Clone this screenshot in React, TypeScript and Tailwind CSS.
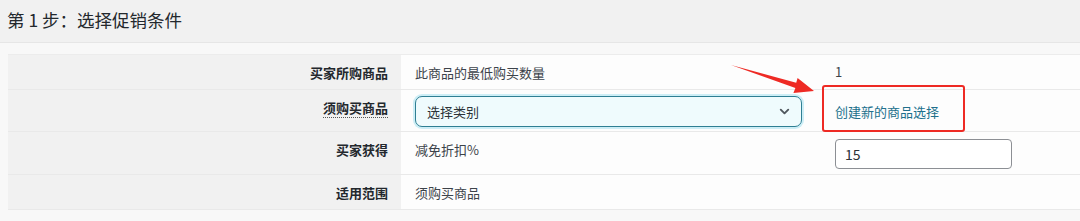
import { ChevronDown } from 'lucide-react';

const font = { fontFamily: '"Noto Sans CJK SC", "Noto Sans", sans-serif' };

function Row({
  label,
  height,
  dotted,
  children,
  extra,
}: {
  label: string;
  height: string;
  dotted?: boolean;
  children: React.ReactNode;
  extra?: React.ReactNode;
}) {
  return (
    <div className={`flex border-b border-[#e9e9e9] ${height}`}>
      <div className="flex w-[393px] shrink-0 justify-end bg-[#f1f1f1] pr-[13px] pt-[9px]">
        <span
          className={`text-[13px] font-bold leading-[18px] text-[#23282d] ${
            dotted ? 'border-b border-dotted border-[#555]' : ''
          } h-fit`}
        >
          {label}
        </span>
      </div>
      <div className="flex flex-1 bg-[#fdfdfd]">
        <div className="w-[426px] shrink-0 pl-[14px]">{children}</div>
        <div className="flex-1 pl-[8px]">{extra}</div>
      </div>
    </div>
  );
}

export default function App() {
  return (
    <div className="relative h-[221px] w-[1080px] overflow-hidden bg-[#f8f8f8]" style={font}>
      <div className="flex h-[43px] items-center border-b border-[#e6e6e6] bg-[#f1f1f1] pb-[2px] pl-[7px]">
        <h2 className="text-[17.5px] leading-none text-[#23282d]">第 1 步：选择促销条件</h2>
      </div>

      <div className="pl-[8px] pt-[11px]">
        <div className="border-t border-[#ececec]">
          <Row
            label="买家所购商品"
            height="h-[35px]"
            extra={<div className="pt-[8px] text-[13px] leading-[18px] text-[#3c434a]">1</div>}
          >
            <div className="pt-[9px] text-[13px] leading-[18px] text-[#3c434a]">此商品的最低购买数量</div>
          </Row>
          <Row
            label="须购买商品"
            height="h-[42px]"
            dotted
            extra={
              <div className="pt-[13px] text-[13px] leading-[18px] text-[#21708c]">创建新的商品选择</div>
            }
          >
            <div className="pt-[6px]">
              <div className="flex h-[31px] w-[387px] items-center justify-between rounded-[7px] border border-[#2f7f93] bg-[#effbfd] pl-[11px] pr-[9px] shadow-[0_0_0_2px_#cdeef6]">
                <span className="text-[13px] leading-none text-[#2c3338]">选择类别</span>
                <ChevronDown size={15} strokeWidth={3} className="text-[#50575e]" />
              </div>
            </div>
          </Row>
          <Row
            label="买家获得"
            height="h-[43px]"
            extra={
              <div className="pt-[7px]">
                <div className="flex h-[30px] w-[177px] items-center rounded-[4px] border border-[#8c8f94] bg-white pl-[9px] text-[14px] text-[#2c3338]">
                  15
                </div>
              </div>
            }
          >
            <div className="pt-[9px] text-[13px] leading-[18px] text-[#3c434a]">减免折扣%</div>
          </Row>
          <Row label="适用范围" height="h-[35px]">
            <div className="pt-[9px] text-[13px] leading-[18px] text-[#3c434a]">须购买商品</div>
          </Row>
        </div>
      </div>

      {/* annotation overlay */}
      <div className="pointer-events-none absolute left-[822px] top-[85px] h-[47px] w-[143px] rounded-[3px] border-2 border-[#ee2a24]" />
      <svg className="pointer-events-none absolute left-0 top-0" width="1080" height="221">
        <polygon
          points="731,65 796.2,82.8 797.6,78 814,91 793.4,93 795.4,88"
          fill="#ee2a24"
        />
      </svg>
    </div>
  );
}
